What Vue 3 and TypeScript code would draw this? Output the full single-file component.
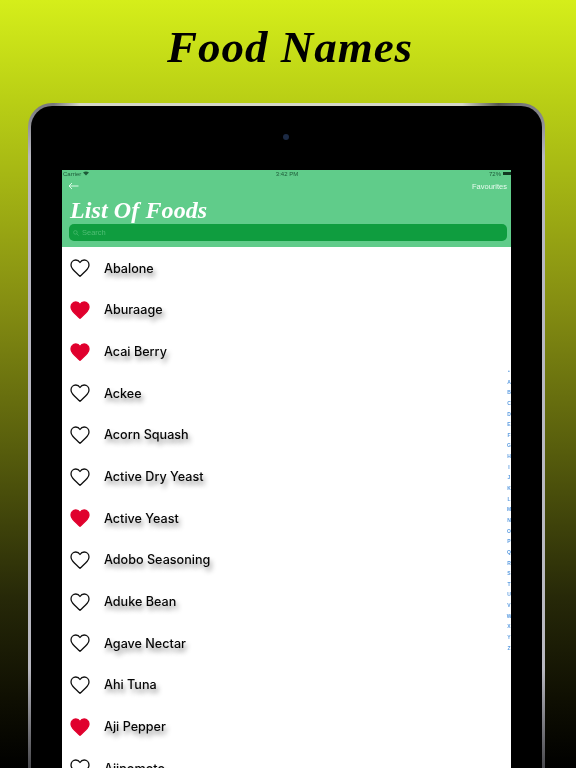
<script setup lang="ts">
interface Food { name: string; fav: boolean }
const foods: Food[] = [
  { name: 'Abalone', fav: false },
  { name: 'Aburaage', fav: true },
  { name: 'Acai Berry', fav: true },
  { name: 'Ackee', fav: false },
  { name: 'Acorn Squash', fav: false },
  { name: 'Active Dry Yeast', fav: false },
  { name: 'Active Yeast', fav: true },
  { name: 'Adobo Seasoning', fav: false },
  { name: 'Aduke Bean', fav: false },
  { name: 'Agave Nectar', fav: false },
  { name: 'Ahi Tuna', fav: false },
  { name: 'Aji Pepper', fav: true },
  { name: 'Ajinomoto', fav: false },
]
const index: string[] = ['•', ...'ABCDEFGHIJKLMNOPQRSTUVWXYZ'.split('')]
const heart = 'M10 17.3 C7.5 14.8 4.6 12.2 2.8 10.2 C1.5 8.8 1 7.4 1 6 C1 3 3.2 1 5.8 1 C7.6 1 9.1 2 10 3.5 C10.9 2 12.4 1 14.2 1 C16.8 1 19 3 19 6 C19 7.4 18.5 8.8 17.2 10.2 C15.4 12.2 12.5 14.8 10 17.3 Z'
</script>

<template>
  <div class="page">
    <h1 class="title">Food Names</h1>
    <div class="device">
      <div class="bezel">
        <div class="camera"></div>
        <div class="screen">
          <div class="header">
            <div class="status">
              <span class="status-side">
                Carrier
                <svg class="wifi" viewBox="0 0 10 7" width="6" height="5"><path d="M5 7 L0 2 Q5 -1.5 10 2 Z" fill="#1d5a38" /></svg>
              </span>
              <span class="status-mid">3:42 PM</span>
              <span class="status-side status-right">
                72%
                <span class="battery"></span>
              </span>
            </div>
            <div class="nav">
              <svg class="back" viewBox="0 0 11 8" width="11" height="8">
                <path d="M10.5 4 H1 M4 1 L1 4 L4 7" fill="none" stroke="#eafff1" stroke-width="0.9" />
              </svg>
              <span class="fav-link">Favourites</span>
            </div>
            <div class="list-title">List Of Foods</div>
            <div class="search">
              <svg viewBox="0 0 8 8" width="6" height="6">
                <circle cx="3.2" cy="3.2" r="2.4" fill="none" stroke="#4fbd74" stroke-width="0.9" />
                <path d="M5 5 L7.5 7.5" stroke="#4fbd74" stroke-width="0.9" />
              </svg>
              <span>Search</span>
            </div>
          </div>
          <div class="list">
            <div v-for="food in foods" :key="food.name" class="row">
              <svg class="heart" viewBox="0 0 20 18" width="20" height="18">
                <path
                  :d="heart"
                  :fill="food.fav ? '#e0002d' : '#fff'"
                  :stroke="food.fav ? '#e0002d' : '#111'"
                  stroke-width="1.3"
                  stroke-linejoin="round"
                />
              </svg>
              <span class="name">{{ food.name }}</span>
            </div>
            <div class="index">
              <span v-for="letter in index" :key="letter">{{ letter }}</span>
            </div>
          </div>
        </div>
      </div>
    </div>
  </div>
</template>

<style>
html, body { margin: 0; background: #000; }
</style>

<style scoped>
.page {
  width: 576px;
  height: 768px;
  overflow: hidden;
  background: linear-gradient(180deg, #d5ee1a 0%, #b9cf15 13%, #868f12 39%, #565c0c 59%, #262808 78%, #0f0f02 91%, #000 100%);
  display: flex;
  flex-direction: column;
  align-items: flex-start;
}
.title {
  margin: 0;
  flex: none;
  align-self: center;
  height: 103px;
  box-sizing: border-box;
  padding: 21px 0 0 4px;
  font-family: "Liberation Serif", serif;
  font-style: italic;
  font-weight: 700;
  font-size: 45px;
  line-height: 52px;
  letter-spacing: 1px;
  color: #000;
  filter: blur(0.35px);
}
.device {
  width: 517px;
  margin-left: 28px;
  height: 665px;
  flex: none;
  box-sizing: border-box;
  padding: 3px 3px 0;
  border-radius: 24px 24px 0 0;
  background:
    linear-gradient(90deg, transparent 5%, #d6d8c8 10%, #d6d8c8 84%, #55564f 91%, transparent 96%) top / 100% 20px no-repeat,
    linear-gradient(180deg, #77777c 0%, #b8b8c0 8%, #b8b8c0 85%, #48484c 100%);
}
.bezel {
  height: 100%;
  box-sizing: border-box;
  padding: 64px 31px 0;
  border-radius: 21px 21px 0 0;
  background: #000;
  position: relative;
}
.camera {
  position: absolute;
  left: 252px;
  top: 28px;
  width: 6px;
  height: 6px;
  border-radius: 50%;
  background: #1c2a44;
}
.screen {
  width: 449px;
  height: 598px;
  background: #fff;
  overflow: hidden;
  display: flex;
  flex-direction: column;
  filter: blur(0.3px);
}
.header {
  height: 77px;
  flex: none;
  background: #60cc8a;
  padding: 0 4px 0 7px;
  box-sizing: border-box;
  font-family: "Liberation Sans", sans-serif;
}
.status {
  height: 7px;
  margin: 0 -4px 0 -7px;
  padding-left: 1px;
  display: flex;
  justify-content: space-between;
  align-items: center;
  font-size: 6px;
  color: #1d5a38;
}
.status-side {
  width: 80px;
  display: flex;
  align-items: center;
  gap: 2px;
}
.status-right { justify-content: flex-end; }
.battery {
  width: 8px;
  height: 3.5px;
  background: #123a22;
}
.wifi { display: block; }
.nav {
  height: 16px;
  margin-top: 1px;
  display: flex;
  justify-content: space-between;
  align-items: center;
}
.back { display: block; margin-left: -1px; }
.fav-link {
  font-size: 7.5px;
  color: #e8fbef;
}
.list-title {
  height: 29px;
  box-sizing: border-box;
  padding: 2px 0 0 1px;
  margin-top: 1px;
  font-family: "Liberation Serif", serif;
  font-style: italic;
  font-weight: 700;
  font-size: 24px;
  line-height: 26px;
  letter-spacing: 0.1px;
  color: #fff;
  white-space: nowrap;
}
.search {
  height: 17px;
  border-radius: 5px;
  background: #0f9d3f;
  display: flex;
  align-items: center;
  gap: 3px;
  padding-left: 4px;
  font-size: 7.5px;
  color: #4fbd74;
}
.list {
  position: relative;
  flex: 1;
  padding-top: 0.5px;
  overflow: hidden;
}
.row {
  height: 41.67px;
  display: flex;
  align-items: center;
  gap: 14px;
  padding-left: 8px;
}
.heart { display: block; flex: none; }
.name {
  font-family: "Inter", "Liberation Sans", sans-serif;
  font-weight: 500;
  font-size: 12.6px;
  color: #050505;
  text-shadow: 2px 4px 5px rgba(0, 0, 0, 0.45);
}
.index {
  position: absolute;
  right: 0;
  top: 119px;
  width: 4px;
  display: flex;
  flex-direction: column;
  align-items: center;
  font-family: "Liberation Sans", sans-serif;
  font-weight: 700;
  font-size: 5px;
  color: #5a9be0;
}
.index span {
  height: 10.65px;
  line-height: 10.65px;
}
</style>
